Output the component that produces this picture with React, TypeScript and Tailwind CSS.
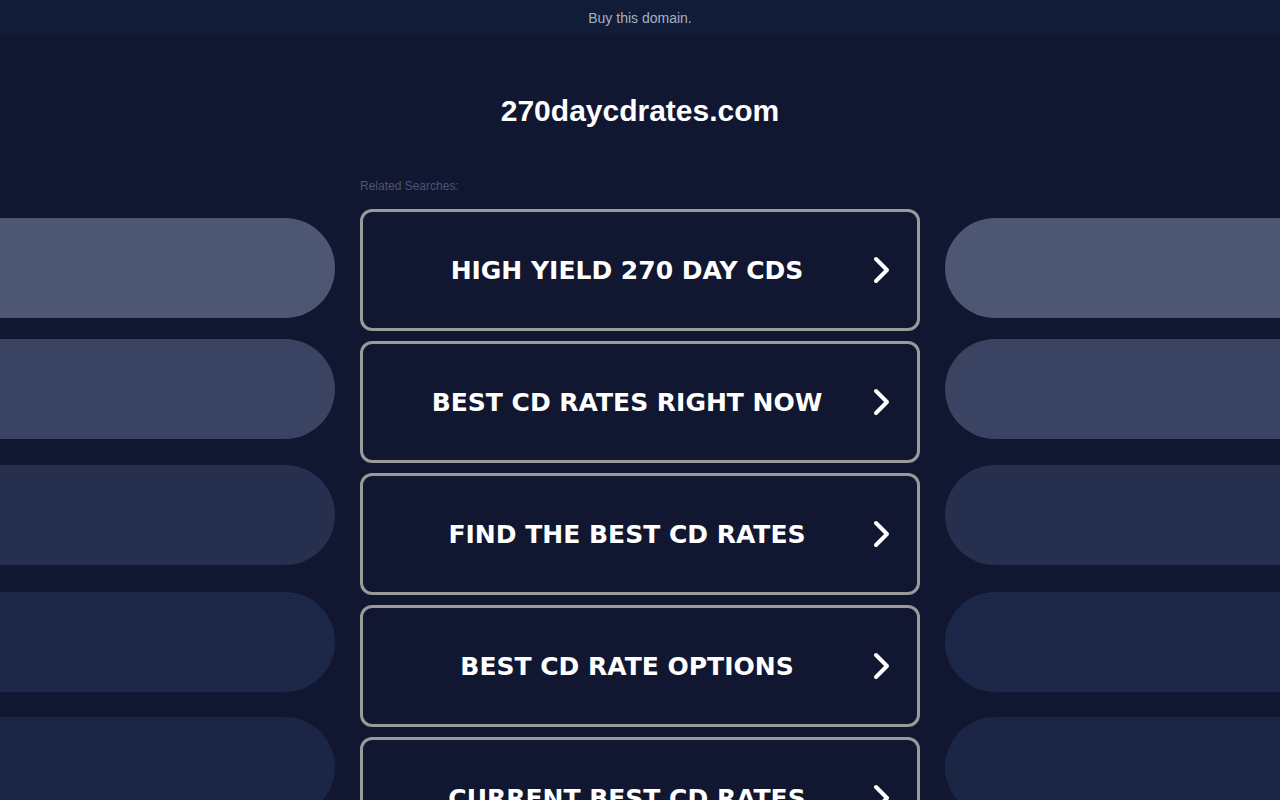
const searches = [
  "HIGH YIELD 270 DAY CDS",
  "BEST CD RATES RIGHT NOW",
  "FIND THE BEST CD RATES",
  "BEST CD RATE OPTIONS",
  "CURRENT BEST CD RATES",
];

// side decoration pills, fading from light to dark
const pills = [
  "bg-[#4d5773]",
  "mt-[21px] bg-[#3a4362]",
  "mt-[26px] bg-[#262f4e]",
  "mt-[27px] bg-[#1c2646] bg-[radial-gradient(#222c52_1px,transparent_1px)] bg-[length:3px_3px]",
  "mt-[25px] bg-[#1a2443] bg-[radial-gradient(#202a50_1px,transparent_1px)] bg-[length:3px_3px]",
];

function Chevron() {
  return (
    <svg width="18" height="28" viewBox="0 0 18 28" fill="none" className="shrink-0">
      <path
        d="M3 3 L14 14 L3 25"
        stroke="white"
        strokeWidth="4"
        strokeLinecap="round"
        strokeLinejoin="round"
      />
    </svg>
  );
}

function SideColumn({ side }: { side: "left" | "right" }) {
  return (
    <div className="flex w-[335px] shrink-0 flex-col pt-[39px]">
      {pills.map((cls, i) => (
        <div
          key={i}
          className={`h-[100px] w-full shrink-0 ${cls} ${
            side === "left" ? "rounded-r-[50px]" : "rounded-l-[50px]"
          }`}
        />
      ))}
    </div>
  );
}

export default function App() {
  return (
    <div className="h-[800px] overflow-hidden bg-[#111730] font-['Liberation_Sans',Arial,sans-serif]">
      <div className="flex h-[35px] items-center justify-center bg-[#101c38] pt-[2px] text-[14px] text-[#a8b0c2]">
        Buy this domain.
      </div>

      <h1 className="mt-[59px] text-center text-[30px] font-bold leading-[34px] text-white">
        270daycdrates.com
      </h1>

      <div className="mt-[51px] flex justify-between">
        <SideColumn side="left" />

        <div className="w-[560px] shrink-0">
          <p className="text-[12px] leading-[14px] text-[#4b5678]">Related Searches:</p>
          <div className="mt-[16px] flex flex-col gap-[10px]">
            {searches.map((s) => (
              <a
                key={s}
                href="#"
                className="flex h-[122px] shrink-0 items-center rounded-[12px] border-[3px] border-[#9a9a9a] pl-[38px] pr-[26px]"
              >
                <span className="flex-1 pr-[20px] pt-[2px] text-center font-['DejaVu_Sans',Verdana,sans-serif] text-[25px] font-bold text-white">
                  {s}
                </span>
                <Chevron />
              </a>
            ))}
          </div>
        </div>

        <SideColumn side="right" />
      </div>
    </div>
  );
}
